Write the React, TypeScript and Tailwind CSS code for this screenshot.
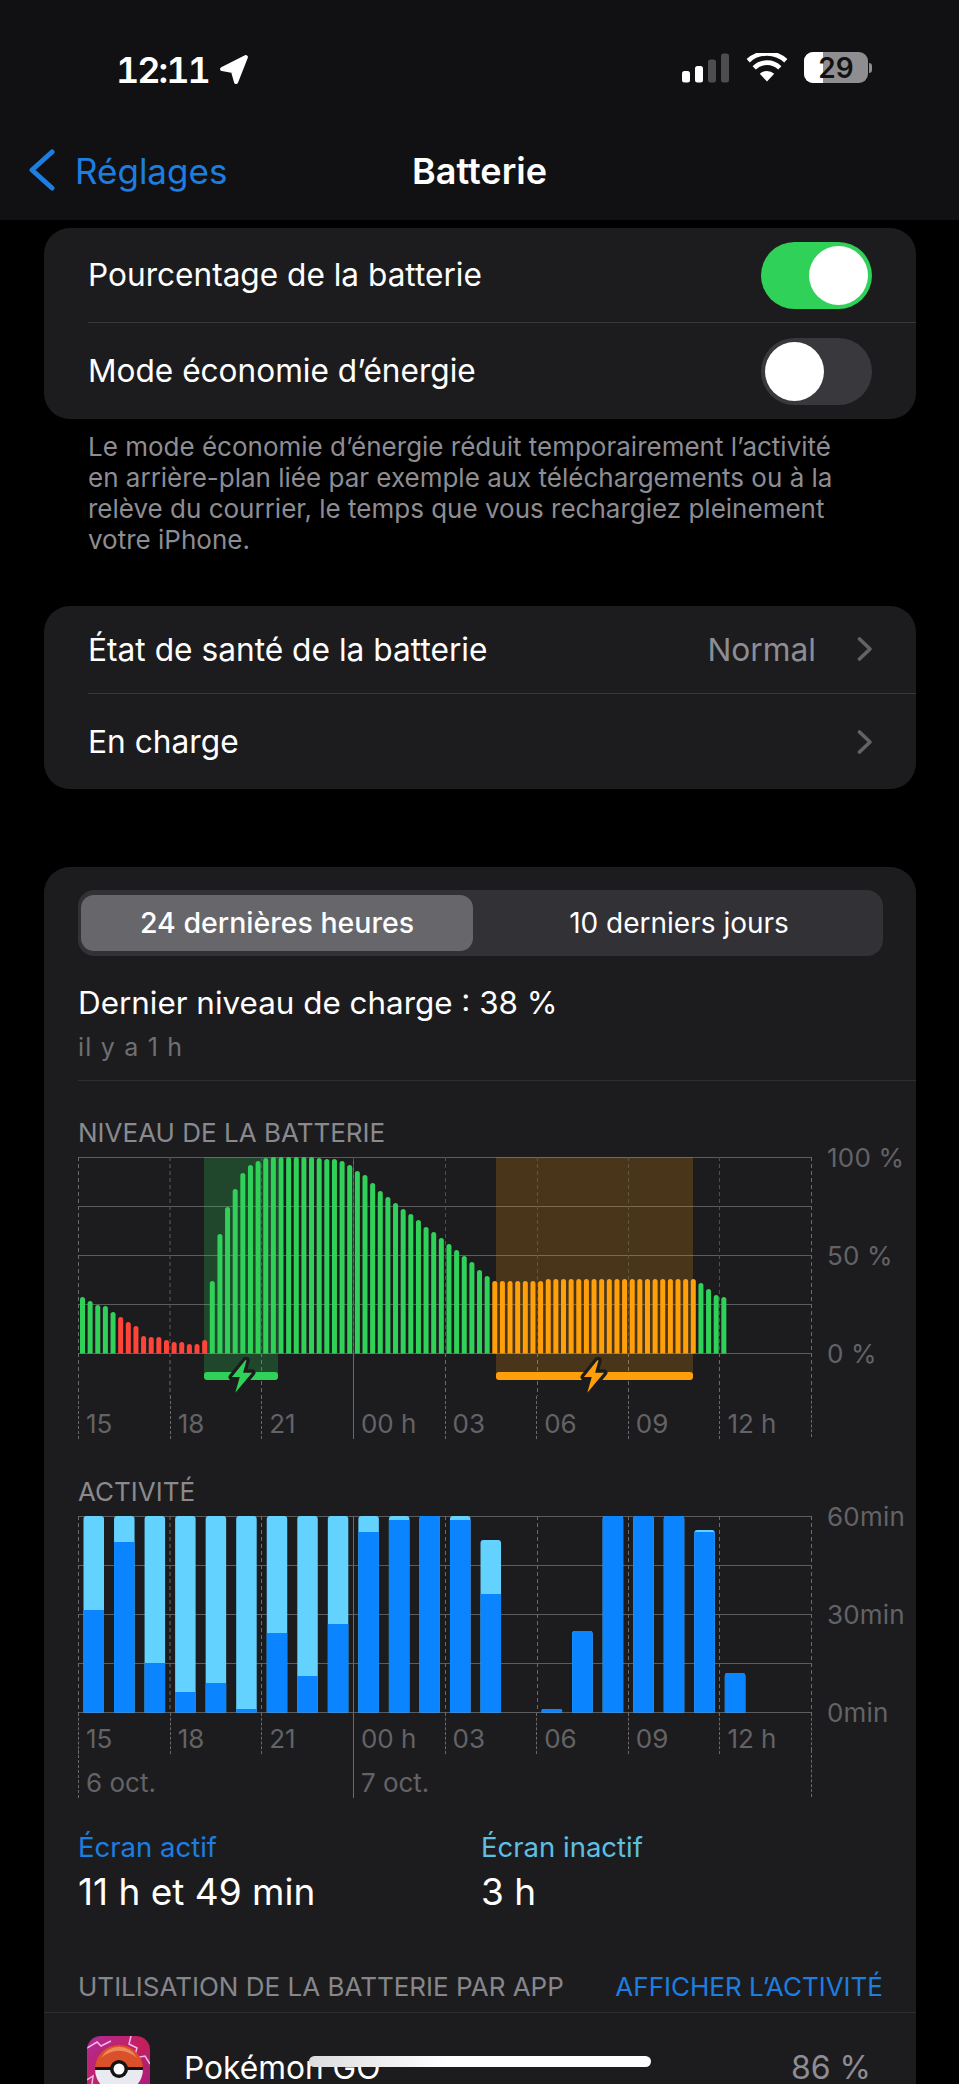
import React from "react";

const VERTICALS = [0, 91.5, 183, 275, 367, 459, 550, 641, 733];

// bar tops measured from the top of the plot, in px
const LEVEL_TOPS = [
  140, 144, 148, 149, 155, 160, 165, 169, 179, 180, 180, 183, 185, 185, 187, 187, 183,
  124, 77, 50, 32, 16, 8, 4, 1, 0, 0, 0, 0, 0, 0, 1, 2, 2, 4, 8, 14, 18, 26, 34, 40,
  46, 52, 57, 63, 70, 75, 81, 87, 93, 99, 105, 113, 119,
  124, 124, 124, 124, 124, 124, 124,
  122, 122, 122, 122, 122, 122, 122, 122, 122, 122, 122, 122, 122, 122, 122, 122, 122, 122, 122,
  122, 126, 132, 138, 140,
];

// [slot, top of bar, top of the dark part], px from the top of the plot
const ACTIVITY: [number, number, number][] = [
  [0, 0, 94],
  [1, 0, 26],
  [2, 0, 147],
  [3, 0, 176],
  [4, 0, 167],
  [5, 0, 193],
  [6, 0, 117],
  [7, 0, 160],
  [8, 0, 108],
  [9, 0, 16],
  [10, 0, 4],
  [11, 0, 0],
  [12, 0, 4],
  [13, 24, 78],
  [15, 193, 193],
  [16, 115, 115],
  [17, 0, 0],
  [18, 0, 0],
  [19, 0, 0],
  [20, 14, 16],
  [21, 157, 157],
];

const topRounded = (x: number, y: number, w: number, bottom: number, r: number) => {
  const rr = Math.min(r, (bottom - y) / 2);
  return `M${x} ${bottom}V${y + rr}Q${x} ${y} ${x + rr} ${y}H${x + w - rr}Q${x + w} ${y} ${x + w} ${y + rr}V${bottom}Z`;
};

const levelColor = (i: number) => {
  if (i >= 5 && i <= 16) return "#ff453a";
  if (i >= 54 && i <= 80) return "#ff9f0a";
  return "#30d158";
};

const Grid = ({ bottom }: { bottom: number }) => (
  <>
    {[0.5, 49.5, 98.5, 147.5, 196.5].map((y) => (
      <line key={y} x1="0" x2="733" y1={y} y2={y} stroke="#5c5c5f" strokeWidth="1" />
    ))}
    {VERTICALS.map((x) => (
      <line
        key={x}
        x1={x + 0.5}
        x2={x + 0.5}
        y1="0"
        y2={bottom}
        stroke="#6a6a6d"
        strokeWidth="1"
        strokeDasharray={x === 275 ? undefined : "4 3"}
      />
    ))}
  </>
);

const Bolt = ({ cx, cy, color }: { cx: number; cy: number; color: string }) => (
  <path
    transform={`translate(${cx} ${cy}) scale(1.12)`}
    d="M3 -14 L-9 1 H-2 L-6 15 L9 -3 H1 L4 -14 Z"
    fill={color}
    stroke="#1c1c1e"
    strokeWidth="6"
    strokeLinejoin="round"
    style={{ paintOrder: "stroke" }}
  />
);

const LevelChart = () => (
  <svg width="734" height="239" viewBox="0 0 734 239" className="block shrink-0">
    <Grid bottom={239} />
    <rect x="126" y="0" width="74" height="219" fill="#30d158" opacity="0.24" />
    <rect x="418" y="0" width="197" height="219" fill="#ff9f0a" opacity="0.2" />
    {LEVEL_TOPS.map((top, i) => (
      <path
        key={i}
        d={topRounded(2 + i * 7.635, top, 5, 196.5, 2.5)}
        fill={levelColor(i)}
      />
    ))}
    {VERTICALS.slice(1, 8).map((x) => (
      <line
        key={x}
        x1={x + 0.5}
        x2={x + 0.5}
        y1="0"
        y2="197"
        stroke="#1c1c1e"
        strokeOpacity="0.35"
        strokeDasharray="4 3"
      />
    ))}
    <rect x="126" y="215" width="74" height="8" rx="3" fill="#30d158" />
    <rect x="418" y="215" width="197" height="8" rx="3" fill="#ff9f0a" />
    <Bolt cx={164} cy={219} color="#30d158" />
    <Bolt cx={516} cy={219} color="#ff9f0a" />
  </svg>
);

const ActivityChart = () => (
  <svg width="734" height="197" viewBox="0 0 734 197" className="block shrink-0">
    <Grid bottom={197} />
    {ACTIVITY.map(([slot, top, dark]) => {
      const x = 5.5 + slot * 30.54;
      return (
        <g key={slot}>
          <path d={topRounded(x, top, 20.5, 196.5, 3)} fill="#64d2ff" />
          <path d={topRounded(x, dark, 20.5, 196.5, dark === top ? 3 : 0)} fill="#0a84ff" />
        </g>
      );
    })}
  </svg>
);

const HourLabels = ({ height, pad }: { height: string; pad: string }) => {
  const hours = ["15", "18", "21", "00 h", "03", "06", "09", "12 h"];
  return (
    <div className={`grid w-[734px] grid-cols-8 border-r border-dashed border-[#6a6a6d] ${height}`}>
      {hours.map((h) => (
        <div
          key={h}
          className={`border-l border-[#6a6a6d] pl-[7px] text-[26px] leading-[30px] text-[#636367] ${pad} ${
            h === "00 h" ? "border-solid" : "border-dashed"
          }`}
        >
          {h}
        </div>
      ))}
    </div>
  );
};

const ChartRow = ({ chart, labels, height }: { chart: React.ReactNode; labels: string[]; height: string }) => (
  <div className={`flex items-start ${height}`}>
    {chart}
    <div className="-mt-[14px] ml-[15px] flex h-[226px] flex-col justify-between text-[26px] leading-[30px] tracking-[0.2px] text-[#636367]">
      {labels.map((l) => (
        <span key={l}>{l}</span>
      ))}
    </div>
  </div>
);

const Toggle = ({ on }: { on: boolean }) => (
  <div
    className={`flex h-[67px] w-[111px] items-center rounded-full px-[4px] ${
      on ? "justify-end bg-[#30d158]" : "justify-start bg-[#39393d]"
    }`}
  >
    <div className="h-[59px] w-[59px] rounded-full bg-white" />
  </div>
);

const Chevron = () => (
  <svg width="16" height="24" viewBox="0 0 16 24" fill="none" className="shrink-0">
    <path d="M2.5 2 L13 12 L2.5 22" stroke="#636367" strokeWidth="3.6" strokeLinecap="round" strokeLinejoin="round" />
  </svg>
);

const StatusBar = () => (
  <div className="flex h-[140px] items-start justify-between pl-[116px] pr-[87px] pt-[52px]">
    <div className="flex items-center gap-[10px]">
      <span className="text-[36px] font-semibold leading-[36px] tracking-[-2px] text-white tabular-nums">12:11</span>
      <svg width="30" height="31" viewBox="0 0 29 30" className="-mt-[1px]">
        <path d="M26 3 L3 14.5 L13.5 16.5 L16.5 27 Z" fill="#fff" stroke="#fff" strokeWidth="4" strokeLinejoin="round" />
      </svg>
    </div>
    <div className="flex items-center">
      <svg width="47" height="30" viewBox="0 0 47 30" className="mr-[17px]">
        <rect x="0" y="18" width="8" height="11.5" rx="2.5" fill="#fff" />
        <rect x="13" y="13" width="8" height="16.5" rx="2.5" fill="#fff" />
        <rect x="26" y="6.5" width="8" height="23" rx="2.5" fill="#4d4d4f" />
        <rect x="39" y="0.5" width="8" height="29" rx="2.5" fill="#4d4d4f" />
      </svg>
      <svg width="42" height="29" viewBox="0 0 42 29" fill="none" className="mr-[16px]">
        <path d="M21 28.5 L13.8 20.8 A10.5 10.5 0 0 1 28.2 20.8 Z" fill="#fff" />
        <path d="M8.2 14.8 A18.5 18.5 0 0 1 33.8 14.8" stroke="#fff" strokeWidth="4.6" />
        <path d="M2.2 7.8 A27.5 27.5 0 0 1 39.8 7.8" stroke="#fff" strokeWidth="4.6" />
      </svg>
      <div className="relative h-[31px] w-[64px] overflow-hidden rounded-[9px] bg-[#8e8e90]">
        <div className="h-full w-[19px] bg-white" />
        <span className="absolute inset-0 flex items-center justify-center text-[28px] font-semibold leading-none text-[#111113]">
          29
        </span>
      </div>
      <div className="ml-[1px] h-[10px] w-[3px] rounded-r-full bg-[#8e8e90]" />
    </div>
  </div>
);

const NavBar = () => (
  <div className="relative flex h-[80px] items-start pl-[29px]">
    <svg width="26" height="42" viewBox="0 0 26 42" fill="none" className="mt-[9px]">
      <path d="M23 3 L3 21 L23 39" stroke="#1c7ee0" strokeWidth="5" strokeLinecap="round" strokeLinejoin="round" />
    </svg>
    <span className="ml-[20px] mt-[10px] text-[35px] leading-[42px] text-[#1c7ee0]">Réglages</span>
    <span className="absolute left-0 right-0 top-[10px] text-center text-[36px] font-semibold leading-[42px] text-white">
      Batterie
    </span>
  </div>
);

const PokemonIcon = () => (
  <svg width="63" height="63" viewBox="0 0 63 63" className="shrink-0 overflow-hidden rounded-[14px]">
    <defs>
      <linearGradient id="pogoBg" x1="0" y1="0" x2="1" y2="1">
        <stop offset="0" stopColor="#b02a9a" />
        <stop offset="0.5" stopColor="#c4205a" />
        <stop offset="1" stopColor="#a01c8c" />
      </linearGradient>
    </defs>
    <rect width="63" height="63" fill="url(#pogoBg)" />
    <path d="M0 12 L10 6 L14 10 L24 5" stroke="#f3b6ee" strokeWidth="1.5" fill="none" />
    <path d="M44 0 L42 8 L50 12 L47 22 L58 20 L63 28" stroke="#f3b6ee" strokeWidth="1.5" fill="none" />
    <path d="M0 44 L6 40 L4 56" stroke="#f3b6ee" strokeWidth="1.5" fill="none" />
    <path d="M8 33 A24 24 0 0 1 56 33 Z" fill="#d9502a" />
    <path d="M14 22 A20 20 0 0 1 50 22 A26 26 0 0 0 14 22 Z" fill="#ee8a5a" />
    <path d="M8 33 A24 24 0 0 0 56 33 Z" fill="#e9e9f2" />
    <rect x="8" y="31" width="48" height="3" fill="#141414" />
    <circle cx="32" cy="33" r="9" fill="#141414" />
    <circle cx="32" cy="33" r="5.5" fill="#fff" />
  </svg>
);

const Card = ({ children, className = "" }: { children: React.ReactNode; className?: string }) => (
  <section className={`ml-[44px] mr-[43px] rounded-[26px] bg-[#1c1c1e] ${className}`}>{children}</section>
);

export default function App() {
  return (
    <div className="relative h-[2084px] w-[959px] overflow-hidden bg-black text-white [font-family:Inter,sans-serif]">
      <header className="h-[220px] bg-[#111113]">
        <StatusBar />
        <NavBar />
      </header>

      <Card className="mt-[8px]">
        <div className="flex h-[94px] items-center justify-between pl-[44px] pr-[44px] text-[31.6px]">
          <span>Pourcentage de la batterie</span>
          <Toggle on />
        </div>
        <div className="ml-[44px] h-px bg-[#38383a]" />
        <div className="flex h-[96px] items-center justify-between pl-[44px] pr-[44px] text-[31.6px]">
          <span>Mode économie d’énergie</span>
          <Toggle on={false} />
        </div>
      </Card>

      <p className="ml-[88px] mt-[12px] w-[820px] text-[26px] leading-[31px] text-[#8d8d93]">
        Le mode économie d’énergie réduit temporairement l’activité
        <br />
        en arrière-plan liée par exemple aux téléchargements ou à la
        <br />
        relève du courrier, le temps que vous rechargiez pleinement
        <br />
        votre iPhone.
      </p>

      <Card className="mt-[51px]">
        <div className="flex h-[87px] items-center justify-between pl-[44px] pr-[43px] text-[31.7px]">
          <span>État de santé de la batterie</span>
          <span className="flex items-center gap-[41px] text-[#8d8d93]">
            Normal
            <Chevron />
          </span>
        </div>
        <div className="ml-[44px] h-px bg-[#38383a]" />
        <div className="flex h-[95px] items-center justify-between pl-[44px] pr-[43px] text-[31.7px]">
          <span>En charge</span>
          <Chevron />
        </div>
      </Card>

      <Card className="mt-[78px] h-[1300px] pt-[23px]">
        <div className="pl-[34px]">
          <div className="flex h-[66px] w-[805px] items-center rounded-[16px] bg-[#313136] px-[3px]">
            <div className="flex h-[56px] w-[392px] items-center justify-center rounded-[13px] bg-[#66666b] text-[28.5px] font-medium">
              24 dernières heures
            </div>
            <div className="flex-1 pl-[5px] text-center text-[28px]">10 derniers jours</div>
          </div>

          <div className="mt-[27px] h-[40px] text-[31.4px] leading-[40px]">Dernier niveau de charge : 38 %</div>
          <div className="mt-[9px] h-[30px] text-[25px] leading-[30px] tracking-[1.2px] text-[#6f6f73]">il y a 1 h</div>
        </div>
        <div className="ml-[34px] mt-[18px] h-px bg-[#2f2f31]" />

        <div className="mt-[37px] pl-[34px]">
          <div className="mb-[9px] h-[30px] text-[26px] leading-[30px] text-[#8a8a8e]">NIVEAU DE LA BATTERIE</div>
          <ChartRow chart={<LevelChart />} labels={["100 %", "50 %", "0 %"]} height="h-[239px]" />
          <HourLabels height="h-[41px]" pad="pt-[13px]" />

          <div className="mb-[9px] mt-[40px] h-[30px] text-[26px] leading-[30px] text-[#8a8a8e]">ACTIVITÉ</div>
          <ChartRow chart={<ActivityChart />} labels={["60min", "30min", "0min"]} height="h-[197px]" />
          <HourLabels height="h-[37px]" pad="pt-[11px]" />
          <div className="grid h-[47px] w-[734px] grid-cols-8 border-r border-dashed border-[#6a6a6d] text-[26px] leading-[30px] text-[#636367]">
            <div className="col-span-3 border-l border-dashed border-[#6a6a6d] pl-[7px] pt-[18px]">6 oct.</div>
            <div className="col-span-5 border-l border-solid border-[#6a6a6d] pl-[7px] pt-[18px]">7 oct.</div>
          </div>

          <div className="mt-[34px] flex">
            <div className="w-[403px]">
              <div className="h-[32px] text-[27.5px] leading-[32px] text-[#1c7ee0]">Écran actif</div>
              <div className="mt-[7px] h-[44px] text-[37px] leading-[44px]">11 h et 49 min</div>
            </div>
            <div>
              <div className="h-[32px] text-[27.5px] leading-[32px] text-[#5fbfe0]">Écran inactif</div>
              <div className="mt-[7px] h-[44px] text-[37px] leading-[44px]">3 h</div>
            </div>
          </div>

          <div className="mt-[57px] flex h-[30px] w-[805px] items-center justify-between text-[26px]">
            <span className="text-[#87878b]">UTILISATION DE LA BATTERIE PAR APP</span>
            <span className="text-[#1c7ee0]">AFFICHER L’ACTIVITÉ</span>
          </div>
        </div>
        <div className="mt-[11px] h-px bg-[#2f2f31]" />
        <div className="flex items-start pl-[43px] pr-[45px] pt-[23px]">
          <PokemonIcon />
          <span className="ml-[34px] mt-[12px] flex-1 text-[31.7px] leading-[40px]">Pokémon GO</span>
          <span className="mt-[12px] text-[32px] leading-[40px] text-[#8d8d93]">86 %</span>
        </div>
      </Card>

      <div className="absolute left-[309px] top-[2056px] h-[11px] w-[342px] rounded-full bg-gradient-to-r from-[#dcdcdc] via-white via-40% to-white" />
    </div>
  );
}
